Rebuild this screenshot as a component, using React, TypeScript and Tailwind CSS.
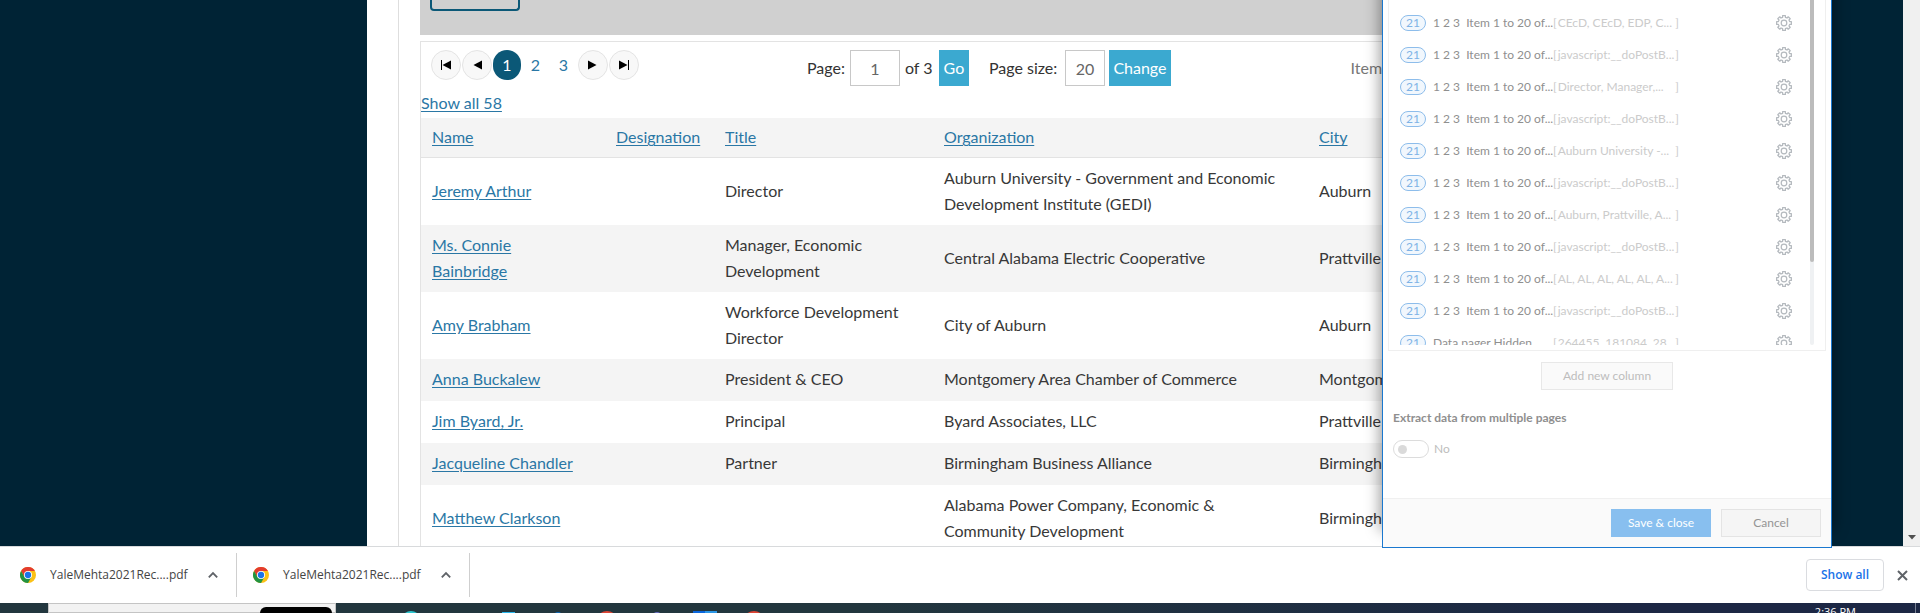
import React, { useState } from 'react';

const COLUMNS = [
  { label: 'Name', cell: 'w-[183px] pl-[11px]' },
  { label: 'Designation', cell: 'w-[109px] pl-3' },
  { label: 'Title', cell: 'w-[219px] pl-3' },
  { label: 'Organization', cell: 'w-[375px] pl-3' },
  { label: 'City', cell: 'pl-3' },
];

const PEOPLE = [
  { name: 'Jeremy Arthur', title: 'Director', org: 'Auburn University - Government and Economic Development Institute (GEDI)', city: 'Auburn' },
  { name: 'Ms. Connie Bainbridge', title: 'Manager, Economic Development', org: 'Central Alabama Electric Cooperative', city: 'Prattville' },
  { name: 'Amy Brabham', title: 'Workforce Development Director', org: 'City of Auburn', city: 'Auburn' },
  { name: 'Anna Buckalew', title: 'President & CEO', org: 'Montgomery Area Chamber of Commerce', city: 'Montgomery' },
  { name: 'Jim Byard, Jr.', title: 'Principal', org: 'Byard Associates, LLC', city: 'Prattville' },
  { name: 'Jacqueline Chandler', title: 'Partner', org: 'Birmingham Business Alliance', city: 'Birmingham' },
  { name: 'Matthew Clarkson', title: '', org: 'Alabama Power Company, Economic & Community Development', city: 'Birmingham' },
];

const PAGER_LABEL = '1 2 3 \u00a0Item 1 to 20 of...';

const FIELDS = [
  { label: PAGER_LABEL, value: 'CEcD, CEcD, EDP, C...' },
  { label: PAGER_LABEL, value: 'javascript:__doPostB...' },
  { label: PAGER_LABEL, value: 'Director, Manager,...' },
  { label: PAGER_LABEL, value: 'javascript:__doPostB...' },
  { label: PAGER_LABEL, value: 'Auburn University -...' },
  { label: PAGER_LABEL, value: 'javascript:__doPostB...' },
  { label: PAGER_LABEL, value: 'Auburn, Prattville, A...' },
  { label: PAGER_LABEL, value: 'javascript:__doPostB...' },
  { label: PAGER_LABEL, value: 'AL, AL, AL, AL, AL, A...' },
  { label: PAGER_LABEL, value: 'javascript:__doPostB...' },
  { label: 'Data pager Hidden...', value: '264455, 181084, 28...' },
];

function gearPath() {
  const teeth = 8;
  const points: string[] = [];
  for (let i = 0; i < teeth; i++) {
    const base = (i / teeth) * Math.PI * 2;
    const corners: [number, number][] = [[-0.24, 5.8], [-0.19, 7.5], [0.19, 7.5], [0.24, 5.8]];
    for (const [offset, radius] of corners) {
      const x = 8 + radius * Math.sin(base + offset);
      const y = 8 - radius * Math.cos(base + offset);
      points.push(`${x.toFixed(2)} ${y.toFixed(2)}`);
    }
  }
  return `M${points.join('L')}Z`;
}

const GEAR = gearPath();

function GearIcon() {
  return (
    <svg viewBox="0 0 16 16" className="size-4" fill="none" stroke="#b4b9be" strokeWidth="1.2" strokeLinejoin="round" aria-hidden="true">
      <path d={GEAR} />
      <circle cx="8" cy="8" r="2.8" />
    </svg>
  );
}

function ChromeIcon() {
  return (
    <svg viewBox="0 0 48 48" className="size-4" aria-hidden="true">
      <circle cx="24" cy="24" r="24" fill="#fbc116" />
      <path d="M24 12H44.8A24 24 0 0 0 3.2 12L13.6 30Z" fill="#e33b2e" />
      <path d="M13.6 30 3.2 12A24 24 0 0 0 24 48L34.4 30Z" fill="#229342" />
      <circle cx="24" cy="24" r="12" fill="#fff" />
      <circle cx="24" cy="24" r="9.5" fill="#1a73e8" />
    </svg>
  );
}

function PagerArrow({ label, back, bar }: { label: string; back?: boolean; bar?: boolean }) {
  return (
    <button aria-label={label} className="flex size-[30px] items-center justify-center rounded-full border border-[#e4e4e4] bg-[#f8f8f8]">
      <svg viewBox="0 0 10 10" className="size-[10px]" aria-hidden="true">
        <path d={back ? 'M10 .5 1.5 5 10 9.5Z' : 'M0 .5 8.5 5 0 9.5Z'} fill="#000" />
        {bar && <path d={back ? 'M.5 0v10' : 'M9.5 0v10'} stroke="#000" />}
      </svg>
    </button>
  );
}

function Pager() {
  return (
    <div className="flex h-[49px] items-start pt-2 pl-[10px] text-[#333]">
      <nav aria-label="Pages" className="flex items-center gap-px">
        <PagerArrow label="First page" back bar />
        <PagerArrow label="Previous page" back />
        <a href="#1" className="flex h-[30px] w-7 items-center justify-center rounded-full bg-[#0b5877] text-white">1</a>
        <a href="#2" className="w-[27px] text-center text-[#2a77a5]">2</a>
        <a href="#3" className="w-[27px] text-center text-[#2a77a5]">3</a>
        <PagerArrow label="Next page" />
        <PagerArrow label="Last page" bar />
      </nav>
      <div className="ml-[168px] flex h-9 items-center">
        <label htmlFor="page">Page:</label>
        <input id="page" defaultValue="1" className="ml-[5px] h-9 w-[50px] border border-[#c8c8c8] text-center text-[#666]" />
        <span className="ml-[5px] w-[34px]">of 3</span>
        <button className="h-9 w-[30px] bg-[#3ba9d0] text-white">Go</button>
        <label htmlFor="size" className="ml-5 w-[76px]">Page size:</label>
        <input id="size" defaultValue="20" className="h-9 w-10 border border-[#c8c8c8] text-center text-[#666]" />
        <button className="ml-1 h-9 w-[62px] bg-[#3ba9d0] text-white">Change</button>
      </div>
      <span className="mr-[5px] ml-auto flex h-9 items-center text-[#777]">Item 1 to 20 of 58</span>
    </div>
  );
}

function MemberTable() {
  return (
    <table className="w-full table-fixed border-collapse text-left leading-[26px]">
      <thead>
        <tr className="h-[39px] border-b border-[#e3e3e3] bg-[#f4f4f4]">
          {COLUMNS.map((c) => (
            <th key={c.label} className={`font-normal ${c.cell}`}>
              <a href="#sort" className="text-[#2a77a5] underline underline-offset-2">{c.label}</a>
            </th>
          ))}
        </tr>
      </thead>
      <tbody>
        {PEOPLE.map((p) => (
          <tr key={p.name} className="h-[42px] text-[#383838] even:bg-[#f4f4f4]">
            <td className="pt-[7px] pr-6 pb-2 pl-[11px]">
              <a href="#member" className="text-[#2a77a5] underline underline-offset-2">{p.name}</a>
            </td>
            <td />
            <td className="px-3 pt-[7px] pb-2">{p.title}</td>
            <td className="pt-[7px] pr-6 pb-2 pl-3">{p.org}</td>
            <td className="px-3 pt-[7px] pb-2">{p.city}</td>
          </tr>
        ))}
      </tbody>
    </table>
  );
}

function ExtractPanel() {
  const [multiple, setMultiple] = useState(false);
  return (
    <aside className="absolute top-0 right-[88px] bottom-[65px] flex w-[450px] flex-col border-x border-b border-[#1a78cf] bg-white font-['Lato','Open_Sans',sans-serif] text-xs text-[#8f8f8f] shadow-[0_-20px_14px_2px_rgba(0,0,0,0.4)]">
      <div className="mx-[5px] flex min-h-0 flex-1 border-x border-b border-[#efefef] pb-[5px]">
        <ul className="min-h-0 flex-1 overflow-hidden pt-[7px] pl-[11px]">
          {FIELDS.map((f, i) => (
            <li key={i} className="flex h-8 items-center">
              <span className="flex h-4 w-[26px] items-center justify-center rounded-full border border-[#8dbdeb] bg-[#f1f7fd] text-[#7fb3e6]">21</span>
              <span className="ml-[7px] w-[120px] whitespace-nowrap">{f.label}</span>
              <span className="flex w-[126px] whitespace-nowrap text-[#cbcbcb]">
                <span>[</span>
                <span className="ml-px flex-1">{f.value}</span>
                <span>]</span>
              </span>
              <button aria-label="Column settings" className="ml-[97px]">
                <GearIcon />
              </button>
            </li>
          ))}
        </ul>
        <div className="mr-[11px] w-1 rounded-full bg-[#eff1f3]">
          <div className="h-[76%] rounded-b-full bg-[#bcbcbc]" />
        </div>
      </div>
      <div className="flex justify-center pt-[11px]">
        <button className="h-7 w-[132px] border border-[#e8e8e8] bg-[#fafafa] text-[#bdbdbd]">Add new column</button>
      </div>
      <div className="h-[108px] pt-[19px] pl-[10px]">
        <h2 className="text-xs leading-[18px] font-bold">Extract data from multiple pages</h2>
        <label className="mt-[13px] flex items-center gap-[5px] text-[#bdbdbd]">
          <input type="checkbox" role="switch" checked={multiple} onChange={(e) => setMultiple(e.target.checked)} className="peer sr-only" />
          <span className="flex h-[18px] w-9 items-center rounded-full border border-[#dcdcdc] px-1 peer-checked:justify-end">
            <span className="size-[9px] rounded-full bg-[#dadada]" />
          </span>
          {multiple ? 'Yes' : 'No'}
        </label>
      </div>
      <footer className="flex h-[49px] items-center justify-end gap-[10px] border-t border-[#f0f0f0] bg-[#fafafa] pr-[10px]">
        <button className="h-7 w-[100px] bg-[#88bfef] text-white">Save &amp; close</button>
        <button className="h-7 w-[100px] border border-[#e4e4e4] bg-[#f5f5f5] text-[#949494]">Cancel</button>
      </footer>
    </aside>
  );
}

function Download({ file }: { file: string }) {
  return (
    <div className="flex h-11 w-[233px] items-center border-r border-[#cfcfcf] pl-4">
      <ChromeIcon />
      <span className="ml-[14px] flex-1 text-[#444]">{file}</span>
      <button aria-label="More options" className="mr-[18px]">
        <svg viewBox="0 0 10 10" className="size-[10px]" fill="none" stroke="#5f6368" strokeWidth="1.8" aria-hidden="true">
          <path d="M.8 7.3 5 3 9.2 7.3" />
        </svg>
      </button>
    </div>
  );
}

function DownloadBar() {
  return (
    <div className="flex h-[57px] shrink-0 items-center border-t border-[#d8dadc] bg-white pl-1 font-['Open_Sans',sans-serif] text-xs">
      <Download file="YaleMehta2021Rec....pdf" />
      <Download file="YaleMehta2021Rec....pdf" />
      <button className="ml-auto h-8 w-[78px] rounded border border-[#dadce0] font-semibold text-[#1a73e8]">Show all</button>
      <button aria-label="Close" className="mr-3 ml-[13px]">
        <svg viewBox="0 0 11 11" className="size-[11px]" stroke="#5f6368" strokeWidth="2" aria-hidden="true">
          <path d="m1 1 9 9M10 1l-9 9" />
        </svg>
      </button>
    </div>
  );
}

function Taskbar() {
  return (
    <div className="flex h-[10px] shrink-0 overflow-hidden bg-linear-to-r from-[#22363e] from-45% to-[#1c2744] to-85% pl-12">
      <div className="flex w-72 items-start justify-end border border-[#c4c4c4] bg-[#f2f2f2] pt-[3px] pr-[3px]">
        <div className="h-5 w-[72px] rounded-md bg-black" />
      </div>
      <svg className="h-[10px] w-[440px]" viewBox="0 0 440 10" aria-hidden="true">
        <circle cx="75" cy="18" r="10" fill="#2bc5cf" />
        <path d="M166 9h13v1h-13z" fill="#27b6ec" />
        <circle cx="222" cy="13" r="4" fill="#0d68b8" />
        <circle cx="271" cy="19" r="11" fill="#dd4434" />
        <circle cx="321" cy="13" r="4" fill="#6a6cc4" />
        <path d="M357 8h12v2h-12z" fill="#0a66dd" />
        <path d="M369 8h12v2h-12z" fill="#2a96e6" />
        <circle cx="418" cy="19" r="11" fill="#dd4434" />
      </svg>
      <div className="ml-auto flex items-start">
        <time className="mr-[59px] pt-px font-['Open_Sans',sans-serif] text-[11px] leading-4 text-white">2:36 PM</time>
        <span className="mr-1 h-[10px] w-px bg-[#7a8295]" />
      </div>
    </div>
  );
}

export default function App() {
  return (
    <div className="relative flex h-screen flex-col overflow-hidden bg-white font-['Lato',sans-serif] text-base">
      <div className="flex min-h-0 flex-1">
        <div className="flex min-w-0 flex-1 justify-center overflow-hidden bg-[#002335]">
          <main className="w-[1169px] bg-white px-[31px]">
            <div className="border-l border-[#dedede] px-[21px]">
              <div className="h-[35px] bg-[#d0d0d0] px-[10px]">
                <div className="h-[11px] w-[90px] rounded-b border-x-2 border-b-2 border-[#0b5877]" />
              </div>
              <div className="mt-[6px] border border-[#e3e3e3]">
                <Pager />
                <div className="h-[27px] leading-6">
                  <a href="#all" className="text-[#2a77a5] underline underline-offset-2">Show all 58</a>
                </div>
                <MemberTable />
              </div>
            </div>
          </main>
        </div>
        <div className="flex w-[17px] items-end justify-center bg-[#f0f0f0] pb-[6px]">
          <svg viewBox="0 0 8 5" className="h-[5px] w-2" aria-hidden="true">
            <path d="M0 0h8L4 4.5Z" fill="#505050" />
          </svg>
        </div>
      </div>
      <DownloadBar />
      <Taskbar />
      <ExtractPanel />
    </div>
  );
}
